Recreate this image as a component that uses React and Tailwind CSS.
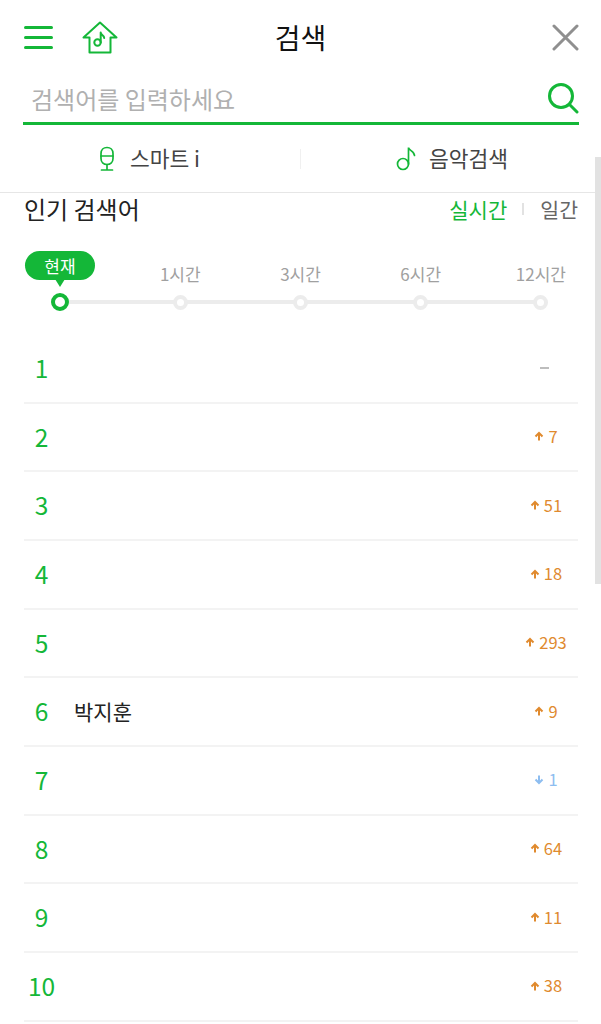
const GREEN = "#14b738";

const rows = [
  { n: 1, dir: "same" },
  { n: 2, dir: "up", v: "7" },
  { n: 3, dir: "up", v: "51" },
  { n: 4, dir: "up", v: "18" },
  { n: 5, dir: "up", v: "293" },
  { n: 6, dir: "up", v: "9", name: "박지훈" },
  { n: 7, dir: "down", v: "1" },
  { n: 8, dir: "up", v: "64" },
  { n: 9, dir: "up", v: "11" },
  { n: 10, dir: "up", v: "38" },
];

function Arrow({ down, color }) {
  return (
    <svg width="10" height="10" viewBox="0 0 10 10" fill="none" stroke={color} strokeWidth="2" className={down ? "rotate-180" : ""}>
      <path d="M5 9.500V2M1.500 5.500 5 2l3.500 3.500" />
    </svg>
  );
}

function Change({ dir, v }) {
  if (dir === "same") {
    return <div className="w-[9px] h-[2px] bg-[#bdbdbd] mt-[-1px] -ml-[4px]" />;
  }
  const down = dir === "down";
  return (
    <div className={`flex items-center gap-[4px] text-[16.5px] -mt-[1px] ${down ? "text-[#8dbdf0]" : "text-[#e08a2e]"}`}>
      <Arrow down={down} color={down ? "#8dbdf0" : "#e08a2e"} />
      <span>{v}</span>
    </div>
  );
}

export default function App() {
  return (
    <div className="relative w-[601px] h-[1024px] overflow-hidden bg-white font-['Noto_Sans_CJK_KR','Noto_Sans',sans-serif]">
      {/* scrollbar */}
      <div className="absolute right-0 top-[157px] w-[6px] h-[427px] bg-[#e2e2e2]" />

      {/* top bar */}
      <header className="relative flex items-center justify-between h-[75px] pl-[24px] pr-[22px]">
        <div className="flex items-center gap-[29px]">
          <div className="flex flex-col gap-[7px] w-[29px]">
            <div className="h-[3px] rounded-full bg-[#14b738]" />
            <div className="h-[3px] rounded-full bg-[#14b738]" />
            <div className="h-[3px] rounded-full bg-[#14b738]" />
          </div>
          <svg width="36" height="33" viewBox="0 0 36 33" fill="none" stroke={GREEN} strokeWidth="2" strokeLinejoin="round" strokeLinecap="round">
            <path d="M18 1.500 1.500 16.500H7.500V31.500H28.500V16.500H34.500Z" />
            <circle cx="15.500" cy="21.500" r="3.200" />
            <path d="M18.700 21.500V11.500c0 2.500 3.500 2.500 3.500 5.500" />
          </svg>
        </div>
        <h1 className="absolute left-0 right-0 text-center text-[28px] leading-none font-normal text-[#111] -mt-[2px]">검색</h1>
        <svg width="27" height="27" viewBox="0 0 27 27" fill="none" stroke="#8f8f8f" strokeWidth="3" strokeLinecap="round">
          <path d="M2 2l23 23M25 2 2 25" />
        </svg>
      </header>

      {/* search field */}
      <div className="ml-[23px] w-[556px] h-[50px] flex items-center justify-between border-b-[3px] border-[#14b738] pl-[8px]">
        <span className="text-[24px] text-[#b0b0b0] leading-none">검색어를 입력하세요</span>
        <svg width="32" height="32" viewBox="0 0 32 32" fill="none" stroke={GREEN} strokeWidth="3" strokeLinecap="round" className="-mt-[2px]">
          <circle cx="14" cy="14" r="11.500" />
          <path d="M23 23l7 7" />
        </svg>
      </div>

      {/* tabs */}
      <div className="flex items-center h-[68px] border-b border-[#e6e6e6]">
        <div className="flex-1 flex items-center justify-center gap-[14px] text-[21.5px] text-[#444] pr-[2px]">
          <svg width="18" height="25" viewBox="0 0 18 25" fill="none" stroke={GREEN} strokeWidth="1.700" strokeLinecap="round">
            <path d="M9 1.500c3.500 0 6 2.500 6 6v5c0 3.500-2.500 6-6 6s-6-2.500-6-6v-5c0-3.500 2.500-6 6-6Z" />
            <path d="M3 10h12M9 18.500V24M3.500 24h11" />
          </svg>
          <span className="leading-none -mt-[1px]">스마트 i</span>
        </div>
        <div className="w-px h-[20px] bg-[#f0f0f0]" />
        <div className="flex-1 flex items-center justify-center gap-[13px] text-[21.5px] text-[#444] pl-[2px]">
          <svg width="20" height="25" viewBox="0 0 20 25" fill="none" stroke={GREEN} strokeWidth="1.700" strokeLinecap="round">
            <circle cx="7" cy="18" r="5.500" />
            <path d="M12.500 18V1.500c0 3 6 3.500 6 8" />
          </svg>
          <span className="leading-none -mt-[1px]">음악검색</span>
        </div>
      </div>

      {/* section heading */}
      <div className="flex items-center justify-between h-[34px] pl-[24px] pr-[23px] -mt-[1px]">
        <h2 className="text-[24px] leading-none font-normal text-[#222]">인기 검색어</h2>
        <div className="flex items-center text-[21px] leading-none">
          <span className="text-[#14b738]">실시간</span>
          <span className="w-[2px] h-[12px] bg-[#e2e2e2] ml-[15px] mr-[16px]" />
          <span className="text-[#666] text-[20.5px]">일간</span>
        </div>
      </div>

      {/* timeline */}
      <div className="relative grid grid-cols-5 w-[601px] h-[86px] mt-[23px]">
        <div className="absolute left-[60px] w-[481px] top-[51px] h-[4px] bg-[#ececec]" />
        <div className="absolute left-[25px] top-[2px] w-[70px] h-[29px] rounded-[15px] bg-[#14b738] flex items-center justify-center text-white text-[17px] leading-none">
          현재
          <div className="absolute left-[30px] top-[28px] w-0 h-0 border-x-[5px] border-x-transparent border-t-[8px] border-t-[#14b738]" />
        </div>
        {["", "1시간", "3시간", "6시간", "12시간"].map((label, i) => (
          <div key={i} className="relative flex flex-col items-center">
            <span className="h-[24px] mt-[13px] text-[17px] leading-[24px] text-[#a0a0a0]">{label}</span>
            <div
              className={
                i === 0
                  ? "absolute top-[44px] w-[18px] h-[18px] rounded-full border-[4px] border-[#14b738] bg-white"
                  : "absolute top-[46px] w-[15px] h-[15px] rounded-full border-[4px] border-[#ececec] bg-white"
              }
            />
          </div>
        ))}
      </div>

      {/* ranking list */}
      <ul className="mx-[24px] w-[554px]">
        {rows.map((r) => (
          <li key={r.n} className="flex items-center h-[68.67px] border-b-2 border-[#f3f3f3]">
            <span className="w-[35px] text-center text-[24.5px] leading-none text-[#14b738]">{r.n}</span>
            <span className="flex-1 pl-[15px] text-[21px] leading-none text-[#222] -mt-[1px]">{r.name}</span>
            <div className="w-[64px] flex justify-center">
              <Change dir={r.dir} v={r.v} />
            </div>
          </li>
        ))}
      </ul>
    </div>
  );
}
